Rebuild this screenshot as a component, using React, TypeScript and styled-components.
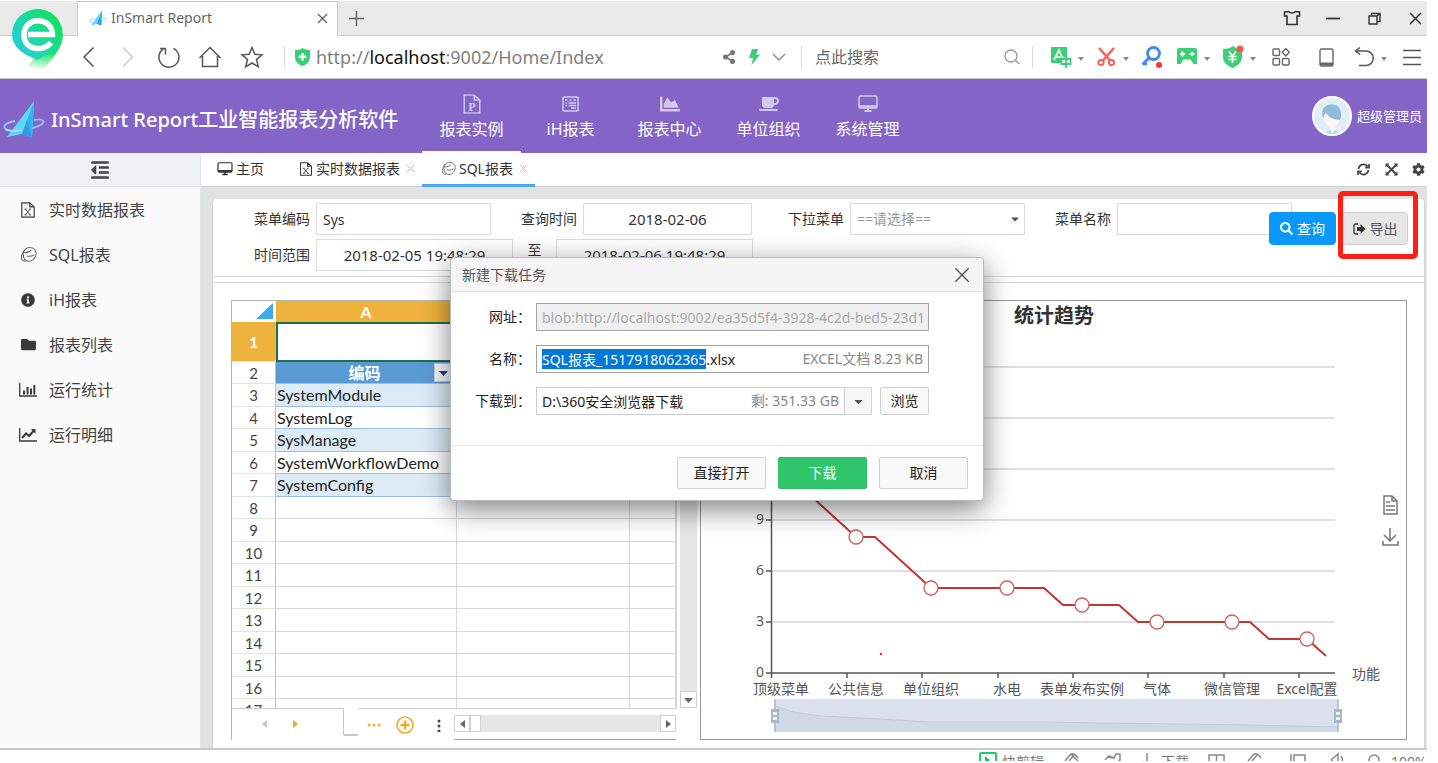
import React, { useEffect, useRef } from 'react';
import styled, { createGlobalStyle } from 'styled-components';
import {
  FaOutdent,
  FaInfoCircle,
  FaFolder,
  FaCoffee,
  FaChartArea,
  FaSearch,
  FaCog,
  FaCaretDown,
  FaShareAlt,
} from 'react-icons/fa';

const GlobalStyle = createGlobalStyle`
  * { box-sizing: border-box; }
  body {
    margin: 0;
    background: #fff;
    color: #333;
    font-family: "Noto Sans", "Noto Sans CJK SC", sans-serif;
    font-size: 14px;
    line-height: 20px;
  }
  button, input, select { font: inherit; color: inherit; }
  button { cursor: pointer; }
  a { color: inherit; text-decoration: none; }
`;

/* ---------- shell ---------- */

const Page = styled.div`
  position: relative;
  padding: 1px 11px 0 0;
`;

const PlainButton = styled.button<{ $w?: number }>`
  display: inline-flex;
  align-items: center;
  justify-content: center;
  flex: none;
  width: ${(p) => (p.$w ? `${p.$w}px` : 'auto')};
  padding: 0;
  border: 0;
  background: none;
`;

const TabStrip = styled.div`
  display: flex;
  height: 35px;
  padding-left: 77px;
  background: #eaeaea;
  border-bottom: 1px solid #cbcbcb;
`;

const BrowserTab = styled.div`
  display: flex;
  align-items: center;
  width: 261px;
  height: 35px;
  padding: 0 8px 2px 11px;
  background: #fff;
  border: solid #cbcbcb;
  border-width: 1px 1px 0;
  color: #666;
`;

const TabTitle = styled.span`
  flex: 1;
  padding-left: 4px;
`;

const WindowControls = styled.div`
  display: flex;
  gap: 17px;
  margin-left: auto;
  color: #333;
`;

const BrandPin = styled.div`
  position: absolute;
  left: 11px;
  top: 8px;
  width: 54px;
  height: 64px;
`;

const AddressBar = styled.div`
  display: flex;
  align-items: center;
  height: 43px;
  padding-left: 69px;
  border-bottom: 1px solid #c9c9c9;
  color: #555;
`;

const Divider = styled.span`
  flex: none;
  width: 1px;
  height: 22px;
  background: #d8d8d8;
`;

const Url = styled.div`
  flex: 1;
  padding-left: 5px;
  font-size: 18px;
  line-height: 24px;
  color: #808080;
  white-space: nowrap;
  b { font-weight: 400; color: #111; }
`;

const SearchBox = styled.input`
  width: 183px;
  height: 28px;
  padding: 0;
  margin-left: 13px;
  border: 0;
  outline: 0;
  font-size: 16px;
  background: none;
  &::placeholder { color: #666; opacity: 1; }
`;

const Tool = styled.div<{ $ml: number }>`
  display: flex;
  flex: none;
  align-items: center;
  margin-left: ${(p) => p.$ml}px;
`;

const Caret = styled.span`
  width: 10px;
  padding-top: 4px;
  line-height: 1px;
  display: flex;
  justify-content: center;
  &::after {
    content: '';
    border: solid transparent;
    border-width: 4px 3px 0;
    border-top-color: #8a8a8a;
  }
`;

/* ---------- application header ---------- */

const AppHeader = styled.header`
  display: flex;
  height: 74px;
  background: #8464c6;
  color: #fff;
`;

const AppTitle = styled.h1`
  display: flex;
  align-items: center;
  gap: 6px;
  width: 422px;
  margin: 0;
  padding: 8px 0 0 3px;
  font-size: 20px;
  line-height: 28px;
  font-weight: 500;
  white-space: nowrap;
`;

const MainNav = styled.nav`
  display: flex;
`;

const NavItem = styled.a<{ $active?: boolean }>`
  display: flex;
  flex-direction: column;
  align-items: center;
  width: 99px;
  padding-top: 15px;
  font-size: 16px;
  line-height: 24px;
  border-bottom: 2px solid ${(p) => (p.$active ? '#fff' : 'transparent')};
  svg { display: block; opacity: 0.65; margin-bottom: 3px; }
`;

const UserBox = styled.a`
  display: flex;
  align-items: center;
  gap: 5px;
  margin-left: auto;
  padding-right: 5px;
  font-size: 13px;
`;

/* ---------- body ---------- */

const Body = styled.div`
  display: flex;
  border-bottom: 2px solid #cacaca;
`;

const Sidebar = styled.aside`
  flex: none;
  width: 201px;
  background: #fafafa;
  border-right: 1px solid #e6e6e6;
`;

const SideToggle = styled(PlainButton)`
  width: 100%;
  height: 34px;
  background: #f0f1f3;
  border-bottom: 1px solid #e4e5e7;
  color: #444;
`;

const SideItem = styled.a`
  display: flex;
  align-items: center;
  height: 45px;
  padding-left: 18px;
  font-size: 16px;
  color: #444;
`;

const SideIcon = styled.span`
  display: flex;
  justify-content: center;
  width: 20px;
  margin-right: 11px;
  color: #3a3a3a;
`;

const Main = styled.main`
  display: flex;
  flex: 1;
  flex-direction: column;
  min-width: 0;
`;

const PageTabs = styled.div`
  display: flex;
  height: 34px;
  border-bottom: 1px solid #d0d0d0;
`;

const PageTab = styled.a<{ $active?: boolean; $pad?: number }>`
  display: flex;
  align-items: center;
  gap: 3px;
  height: 34px;
  padding: 0 7px 0 ${(p) => p.$pad ?? 19}px;
  border-bottom: 3px solid ${(p) => (p.$active ? '#4aa5fb' : 'transparent')};
`;

const TabClose = styled.button`
  display: flex;
  padding: 0;
  margin-left: 3px;
  border: 0;
  background: none;
  color: #b4b4b4;
`;

const TabTools = styled.div`
  display: flex;
  align-items: center;
  gap: 8px;
  margin-left: auto;
  color: #444;
`;

const Stage = styled.div`
  flex: 1;
  padding: 12px 2px 0 11px;
  background: #e1e3e2;
`;

const Sheet = styled.div`
  background: #fff;
  border: solid #d2d2d2;
  border-width: 0 1px;
  border-radius: 4px 4px 0 0;
`;

const Filters = styled.form`
  position: relative;
  height: 78px;
  padding: 4px 0 0 41px;
  border-bottom: 1px solid #d9d9d9;
`;

const FilterRow = styled.div`
  display: flex;
  align-items: center;
  height: 32px;
  margin-bottom: 4px;
`;

const Label = styled.label<{ $w: number }>`
  flex: none;
  width: ${(p) => p.$w}px;
  padding-right: 6px;
  text-align: right;
  white-space: nowrap;
`;

const Until = styled.span`
  width: 43px;
  padding-bottom: 10px;
  text-align: center;
`;

const TextBox = styled.input<{ $w: number; $center?: boolean }>`
  flex: none;
  width: ${(p) => p.$w}px;
  height: 32px;
  padding: 0 6px;
  border: 1px solid #dcdcdc;
  outline: 0;
  background: #fff;
  font-size: ${(p) => (p.$center ? 15 : 14)}px;
  text-align: ${(p) => (p.$center ? 'center' : 'left')};
`;

const SelectWrap = styled.span`
  display: flex;
  align-items: center;
  position: relative;
  color: #999;
  svg { position: absolute; right: 4px; color: #555; pointer-events: none; }
`;

const SelectBox = styled.select`
  width: 175px;
  height: 32px;
  padding: 0 6px;
  border: 1px solid #dcdcdc;
  appearance: none;
  background: #fff;
`;

const FilterActions = styled.div`
  position: absolute;
  top: 13px;
  right: 16px;
  display: flex;
  gap: 6px;
`;

const ActionButton = styled.button<{ $primary?: boolean }>`
  display: flex;
  align-items: center;
  justify-content: center;
  gap: 4px;
  width: ${(p) => (p.$primary ? 67 : 66)}px;
  height: 33px;
  padding: 0;
  border: 1px solid ${(p) => (p.$primary ? '#0a99fb' : '#cfcfcf')};
  border-radius: 4px;
  background: ${(p) => (p.$primary ? '#0a99fb' : '#e6e6e6')};
  color: ${(p) => (p.$primary ? '#fff' : '#555')};
`;

const Highlight = styled.span`
  position: absolute;
  top: -21px;
  right: -10px;
  width: 80px;
  height: 68px;
  border: 5px solid #fd1f12;
  border-radius: 5px;
  pointer-events: none;
`;

const Workspace = styled.section`
  display: flex;
  margin-top: 5px;
  padding: 17px 17px 8px 18px;
  border-top: 1px solid #d9d9d9;
`;

/* ---------- spreadsheet ---------- */

const SheetPane = styled.div`
  flex: none;
  width: 466px;
  margin-right: 3px;
  border-left: 1px solid #b5b5b5;
`;

const GridArea = styled.div`
  display: flex;
  gap: 3px;
  height: 408px;
`;

const GridViewport = styled.div`
  width: 445px;
  overflow: hidden;
  border-top: 1px solid #b5b5b5;
  border-right: 1px solid #d4d4d4;
`;

const GridTable = styled.table`
  width: 444px;
  table-layout: fixed;
  border-collapse: separate;
  border-spacing: 0;
  font-family: Lato, "Noto Sans CJK SC", sans-serif;
  font-size: 16px;
  line-height: 20px;
  color: #222;
  td, th { padding: 0; overflow: hidden; white-space: nowrap; }
`;

const GridRow = styled.tr<{ $h: number }>`
  height: ${(p) => p.$h}px;
`;

const HeadCell = styled.th<{ $on?: boolean }>`
  background: ${(p) => (p.$on ? '#efb33d' : '#fff')};
  color: #fff;
  font-weight: 700;
  border-right: 1px solid ${(p) => (p.$on ? '#efb33d' : '#fff')};
  svg { display: block; margin-left: auto; }
`;

const RowHead = styled.th<{ $on?: boolean }>`
  font-size: 15px;
  font-weight: ${(p) => (p.$on ? 700 : 400)};
  color: ${(p) => (p.$on ? '#fff' : '#444')};
  background: ${(p) => (p.$on ? '#efb33d' : '#fff')};
  border-right: 1px solid #bdbdbd;
  border-bottom: 1px solid #dfe6da;
`;

type CellKind = 'plain' | 'band' | 'white' | 'title' | 'selected';

const cellFill: Record<CellKind, string> = {
  plain: '#fff',
  white: '#fff',
  band: '#ddebf7',
  title: '#5b9bd5',
  selected: '#fff',
};

const Cell = styled.td<{ $kind: CellKind }>`
  background: ${(p) => cellFill[p.$kind]};
  border-bottom: 1px solid ${(p) => (p.$kind === 'plain' ? '#d6d6d6' : '#9bc2e6')};
  border-right: 1px solid ${(p) => (p.$kind === 'plain' ? '#d6d6d6' : 'transparent')};
  ${(p) => p.$kind === 'selected' && 'border: 2px solid #1e7145;'}
  &&& { padding-left: 1px; }
`;

const TitleCell = styled.div`
  display: flex;
  align-items: center;
  color: #fff;
  font-weight: 700;
  span { flex: 1; padding-left: 18px; text-align: center; }
`;

const FilterArrow = styled.button`
  width: 19px;
  height: 19px;
  margin-right: 3px;
  padding: 0;
  border: 1px solid #c4c8d0;
  background: #f7f8fa;
  color: #24408e;
  line-height: 1px;
`;

const VerticalScroll = styled.div`
  display: flex;
  align-items: flex-end;
  width: 17px;
  background: #e6e6e6;
`;

const ScrollButton = styled.button<{ $w: number }>`
  display: flex;
  align-items: center;
  justify-content: center;
  width: ${(p) => p.$w}px;
  height: 17px;
  padding: 0;
  border: 1px solid #d0d0d0;
  background: #fff;
  color: #666;
`;

const SheetTabs = styled.div`
  display: flex;
  height: 32px;
`;

const TabArrows = styled.div`
  display: flex;
  align-items: center;
  gap: 22px;
  width: 112px;
  height: 27px;
  padding: 4px 0 0 28px;
  border-top: 1px solid #c8c8c8;
  border-right: 1px solid #c8c8c8;
`;

const TabSlope = styled.div`
  width: 14px;
  height: 28px;
  border-bottom: 2px solid #c8c8c8;
`;

const TabActions = styled.div`
  display: flex;
  align-items: center;
  width: 96px;
  padding-left: 9px;
  gap: 15px;
  border-top: 1px solid #d0d0d0;
`;

const HorizontalScroll = styled.div`
  width: 222px;
  padding-top: 6px;
  border-top: 1px solid #d0d0d0;
  border-bottom: 1px solid #a6a6a6;
`;

const ScrollTrack = styled.div`
  display: flex;
  background: #e6e6e6;
  button:last-child { margin-left: auto; }
`;

const ChartPane = styled.div`
  flex: 1;
  min-width: 0;
  border: 1px solid #999;
  svg { display: block; width: 100%; }
`;

/* ---------- status bar ---------- */

const StatusBar = styled.footer`
  display: flex;
  align-items: flex-start;
  justify-content: flex-end;
  height: 11px;
  padding-top: 2px;
  overflow: hidden;
  color: #777;
  svg { flex: none; }
`;

const StatusItem = styled.span<{ $w: number }>`
  display: flex;
  flex: none;
  gap: 5px;
  width: ${(p) => p.$w}px;
  white-space: nowrap;
`;

/* ---------- download dialog ---------- */

const DialogLayer = styled.div`
  position: absolute;
  top: 257px;
  left: 0;
  right: 4px;
  display: flex;
  justify-content: center;
`;

const DialogBox = styled.form`
  width: 534px;
  background: #fff;
  border: 1px solid #b3bac0;
  border-radius: 4px;
  box-shadow: 0 8px 28px rgba(0, 0, 0, 0.5);
`;

const DialogHeader = styled.div`
  display: flex;
  align-items: center;
  justify-content: space-between;
  height: 34px;
  padding: 0 13px 0 11px;
  background: #f5f5f5;
  border-bottom: 1px solid #e0e0e0;
  border-radius: 4px 4px 0 0;
  color: #555;
`;

const DialogFields = styled.div`
  display: flex;
  flex-direction: column;
  gap: 14px;
  height: 154px;
  padding: 11px 0 0 10px;
  border-bottom: 1px solid #e6e6e6;
`;

const DialogRow = styled.div`
  display: flex;
  align-items: center;
`;

const DialogLabel = styled.label`
  width: 75px;
  padding-right: 5px;
  text-align: right;
  color: #222;
`;

const DialogInput = styled.div<{ $w: number; $muted?: boolean; $soft?: boolean }>`
  display: flex;
  align-items: center;
  width: ${(p) => p.$w}px;
  height: 28px;
  padding: 0 5px;
  border: 1px solid ${(p) => (p.$soft ? '#c9ccd4' : '#a3a3a3')};
  background: ${(p) => (p.$muted ? '#f0f0f0' : '#fff')};
  color: ${(p) => (p.$muted ? '#aaa' : '#222')};
  input {
    flex: 1;
    min-width: 0;
    height: 21px;
    padding: 0;
    border: 0;
    outline: 0;
    background: none;
  }
  input::selection { background: #0078d7; color: #fff; }
  span { color: #888; white-space: nowrap; }
`;

const DialogButton = styled.button<{ $w: number; $green?: boolean; $small?: boolean }>`
  width: ${(p) => p.$w}px;
  height: ${(p) => (p.$small ? 28 : 32)}px;
  padding: 0;
  border: 1px solid ${(p) => (p.$green ? '#2dc063' : '#d0d0d0')};
  border-radius: 2px;
  background: ${(p) => (p.$green ? '#31c56b' : '#f9f9f9')};
  color: ${(p) => (p.$green ? '#fff' : '#222')};
`;

const DropButton = styled(PlainButton)`
  width: 27px;
  height: 28px;
  margin-right: 8px;
  border: 1px solid #d4d7de;
  border-left: 0;
  background: #f7f7f7;
  color: #555;
`;

const DialogFooter = styled.div`
  display: flex;
  justify-content: flex-end;
  gap: 12px;
  padding: 11px 15px 11px 0;
`;

/* ---------- icons ---------- */

const PlaneLogo = ({ w, h }: { w: number; h: number }) => (
  <svg width={w} height={h} viewBox="0 0 42 38">
    <path d="M12 20 C-3 23 -2 30 14 29.500 C31 28 43 23 40 20 C39 18.500 36 18 31 19" fill="none" stroke="#8fc8f2" strokeWidth="1.800" />
    <path d="M31 0 L4 36 L19 33 L29 36 Z" fill="#5fd6fa" />
    <path d="M31 0 L19 33 L29 36 Z" fill="#35b3ee" />
    <path d="M24 19 L19 33 L29 36 Z" fill="#2b9fe2" />
    <path d="M2 28 C5 31 12 30 19 29" fill="none" stroke="#a9dcf8" strokeWidth="1.500" />
  </svg>
);

const FileIcon = ({ size, letter }: { size: number; letter: 'P' | 'X' }) => (
  <svg width={size} height={size} viewBox="0 0 18 18" fill="none" stroke="currentColor" strokeWidth="1.3">
    <path d="M2 1 H11 L16 5.500 V17 H2 Z M11 1 V5.500 H16" />
    {letter === 'X' ? (
      <path d="M6 8 L11.500 14.500 M11.500 8 L6 14.500 M5 8 H7.500 M10.200 8 H12.500 M5 14.500 H7.500 M10.200 14.500 H12.500" strokeWidth="1" />
    ) : (
      <text x="9" y="15" textAnchor="middle" fontFamily="Liberation Serif, serif" fontWeight="700" fontSize="11" fill="currentColor" stroke="none">P</text>
    )}
  </svg>
);

const SwirlIcon = ({ size }: { size: number }) => (
  <svg width={size} height={size} viewBox="0 0 18 18" fill="none" stroke="#666" strokeWidth="1.1">
    <path d="M3.500 9.500 C3 5 6 1.500 10.500 1.500 C15 1.500 17.500 5.500 17 9 C16 14 12 17 8 16 C5 15 3.500 12.500 3.500 9.500" />
    <path d="M4 7 C7 7.500 10 6 12 4.500 M7 10.500 C10 11.500 13 10.500 15 9.500" />
    <path d="M5 4 C1.500 8 0.500 13 2.500 15 C3.500 16 5 16 6.500 15.500" />
  </svg>
);

const ListIcon = () => (
  <svg width="20" height="20" viewBox="0 0 20 20" fill="none" stroke="currentColor" strokeWidth="1.500">
    <rect x="2" y="3" width="15" height="14" rx="1" />
    <path d="M4 6 H6.500 M8.500 6 H10.500 M12.500 6 H15 M4.500 9 H6 M7.500 9 H15 M4.500 11.500 H6 M7.500 11.500 H15 M10 14 H15" />
  </svg>
);

const MonitorIcon = ({ w, h }: { w: number; h: number }) => (
  <svg width={w} height={h} viewBox="0 0 20 18" fill="none" stroke="currentColor" strokeWidth="1.500">
    <rect x="1" y="1" width="18" height="12" rx="1.500" />
    <path d="M1 11.500 H19" strokeWidth="2.500" />
    <path d="M10 13 V16 M6.500 16 H13.500" strokeWidth="2" />
  </svg>
);

const BarsIcon = () => (
  <svg width="18" height="15" viewBox="0 0 18 15" fill="none" stroke="currentColor">
    <path d="M0.700 1 V14 H18" strokeWidth="1.300" />
    <path d="M5 12.500 V8.500 M8.500 12.500 V5 M12 12.500 V6.500 M15.300 12.500 V3" strokeWidth="2" />
  </svg>
);

const TrendIcon = () => (
  <svg width="18" height="15" viewBox="0 0 18 15" fill="none" stroke="currentColor">
    <path d="M0.700 1 V14 H18" strokeWidth="1.300" />
    <path d="M3 11 L7 6.500 L10 9 L15 3.500" strokeWidth="2" />
    <path d="M11.800 2 H16.500 V6.700 Z" fill="currentColor" stroke="none" />
  </svg>
);

const CrossIcon = ({ size, width = 1.2 }: { size: number; width?: number }) => (
  <svg width={size} height={size} viewBox="0 0 12 12" fill="none" stroke="currentColor" strokeWidth={width}>
    <path d="M1 1 L11 11 M11 1 L1 11" />
  </svg>
);

const ToolbarIcon = ({ children, color = '#555', size = 24 }: { children: React.ReactNode; color?: string; size?: number }) => (
  <svg width={size} height={size} viewBox="0 0 24 24" fill="none" stroke={color} strokeWidth="1.500">
    {children}
  </svg>
);

const Arrow = ({ dir, color = 'currentColor' }: { dir: 'left' | 'right' | 'down'; color?: string }) => {
  const d = { left: 'M7 0 V8 L2 4 Z', right: 'M2 0 V8 L7 4 Z', down: 'M0 2 H9 L4.500 7 Z' }[dir];
  return (
    <svg width="9" height="8" viewBox="0 0 9 8" fill={color}>
      <path d={d} />
    </svg>
  );
};

/* ---------- sections ---------- */

const BrowserChrome = () => (
  <>
    <TabStrip>
      <BrowserTab>
        <PlaneLogo w={18} h={16} />
        <TabTitle>InSmart Report</TabTitle>
        <PlainButton $w={14} aria-label="关闭标签"><CrossIcon size={11} width={1.5} /></PlainButton>
      </BrowserTab>
      <PlainButton $w={37} aria-label="新建标签">
        <svg width="15" height="15" viewBox="0 0 15 15" stroke="#666" strokeWidth="1.500"><path d="M7.500 0 V15 M0 7.500 H15" /></svg>
      </PlainButton>
      <WindowControls>
        <PlainButton $w={24} aria-label="皮肤">
          <svg width="18" height="16" viewBox="0 0 18 16" fill="none" stroke="currentColor" strokeWidth="1.600">
            <path d="M1.500 2 L5.500 1.500 C7 3.500 11 3.500 12.500 1.500 L16.500 2 V6 H14 V14.500 H4 V6 H1.500 Z" />
          </svg>
        </PlainButton>
        <PlainButton $w={24} aria-label="最小化">
          <svg width="14" height="4" viewBox="0 0 14 4" stroke="currentColor" strokeWidth="1.800"><path d="M0 2.500 H14" /></svg>
        </PlainButton>
        <PlainButton $w={24} aria-label="还原">
          <svg width="13" height="13" viewBox="0 0 13 13" fill="none" stroke="currentColor" strokeWidth="1.400">
            <path d="M1 4 H9 V12 H1 Z M3.500 4 V1.500 H12 V9.500 H9 M9 4 L12 1.500" />
          </svg>
        </PlainButton>
        <PlainButton $w={24} aria-label="关闭"><CrossIcon size={13} width={1.4} /></PlainButton>
      </WindowControls>
    </TabStrip>

    <AddressBar>
      <PlainButton $w={40} aria-label="后退"><ToolbarIcon><path d="M16.500 2.500 L7 12 L16.500 21.500" /></ToolbarIcon></PlainButton>
      <PlainButton $w={38} aria-label="前进"><ToolbarIcon color="#ccc"><path d="M7 2.500 L16.500 12 L7 21.500" /></ToolbarIcon></PlainButton>
      <PlainButton $w={43} aria-label="刷新">
        <ToolbarIcon><path d="M7 3.500 A10 10 0 1 0 16.500 3.300 M3 3.500 H8.500 V9.500" /></ToolbarIcon>
      </PlainButton>
      <PlainButton $w={40} aria-label="主页">
        <ToolbarIcon><path d="M1.500 13 L12 2.500 L22.500 13 M4.500 11 V21.500 H19.500 V11" /></ToolbarIcon>
      </PlainButton>
      <PlainButton $w={43} aria-label="收藏">
        <ToolbarIcon><path d="M12 2.500 L14.800 9.300 L22 9.800 L16.500 14.500 L18.300 21.800 L12 18 L5.700 21.800 L7.500 14.500 L2 9.800 L9.200 9.300 Z" /></ToolbarIcon>
      </PlainButton>
      <Tool $ml={11}><Divider /></Tool>
      <Tool $ml={9}>
        <svg width="17" height="18" viewBox="0 0 17 18">
          <path d="M1 2 C5 2 7 1 8.500 0 C10 1 12 2 16 2 V9 C16 14 12 17 8.500 18 C5 17 1 14 1 9 Z" fill="#36cf73" />
          <path d="M8.500 5 V12.500 M4.700 8.700 H12.300" stroke="#fff" strokeWidth="2.400" />
        </svg>
      </Tool>
      <Url>http://<b>localhost</b>:9002/Home/Index</Url>
      <PlainButton $w={25} aria-label="分享"><FaShareAlt size={14} color="#777" /></PlainButton>
      <PlainButton $w={25} aria-label="加速">
        <svg width="12" height="16" viewBox="0 0 12 16" fill="#36cf73"><path d="M4 0 H10.500 L8 5.500 H12 L3.500 16 L5 9 H1 Z" /></svg>
      </PlainButton>
      <PlainButton $w={25} aria-label="展开">
        <svg width="14" height="8" viewBox="0 0 14 8" fill="none" stroke="#888" strokeWidth="1.300"><path d="M1 1 L7 7 L13 1" /></svg>
      </PlainButton>
      <Tool $ml={10}><Divider /></Tool>
      <SearchBox placeholder="点此搜索" aria-label="点此搜索" />
      <PlainButton $w={28} aria-label="搜索">
        <svg width="16" height="16" viewBox="0 0 16 16" fill="none" stroke="#999" strokeWidth="1.300"><circle cx="7" cy="7" r="6" /><path d="M11.500 11.500 L15.500 15" /></svg>
      </PlainButton>
      <Tool $ml={6}><Divider /></Tool>
      <Tool $ml={13}>
        <PlainButton $w={30} aria-label="翻译">
          <ToolbarIcon color="#3ad077">
            <path d="M2 2 H18 V12 H13 V18 H2 Z" fill="#3ad077" stroke="none" />
            <path d="M5 15 L10 5 L13 12 M7 12 H12" stroke="#fff" strokeWidth="1.700" />
            <path d="M12.500 14 H21.500 V19 H12.500 Z M17 11 V23" strokeWidth="1.800" />
          </ToolbarIcon>
        </PlainButton>
        <Caret />
      </Tool>
      <Tool $ml={5}>
        <PlainButton $w={30} aria-label="截图">
          <ToolbarIcon color="#f7625c">
            <path d="M5 3 L16.500 16 M20 3 L8.500 16" strokeWidth="2.600" />
            <circle cx="7" cy="17.500" r="2.600" strokeWidth="2" /><circle cx="17.500" cy="17.500" r="2.600" strokeWidth="2" />
          </ToolbarIcon>
        </PlainButton>
        <Caret />
      </Tool>
      <Tool $ml={6}>
        <PlainButton $w={30} aria-label="查找">
          <ToolbarIcon color="#4288f2">
            <circle cx="13.500" cy="8.500" r="6" strokeWidth="2.800" />
            <path d="M9 13 L2.500 19.500 M4 17 L6.500 20" strokeWidth="3" />
            <circle cx="19" cy="20" r="3" fill="#f33" stroke="none" />
          </ToolbarIcon>
        </PlainButton>
      </Tool>
      <Tool $ml={5}>
        <PlainButton $w={30} aria-label="游戏">
          <ToolbarIcon color="#3ad077">
            <path d="M4 3 H20 Q22 3 22 5 V19 H18.500 L15.500 14.500 H8.500 L5.500 19 H2 V5 Q2 3 4 3 Z" fill="#3ad077" stroke="none" />
            <path d="M7.500 6.500 V11.500 M5 9 H10 M14.500 9 H19.500 M17 7 V11" stroke="#fff" strokeWidth="2" />
          </ToolbarIcon>
        </PlainButton>
        <Caret />
      </Tool>
      <Tool $ml={6}>
        <PlainButton $w={30} aria-label="购物">
          <ToolbarIcon color="#3ad077">
            <path d="M2 4 C7 4 9.500 3 12 1 C14.500 3 17 4 21 4 V12 C21 18 16 21 11.500 23 C7 21 2 18 2 12 Z" fill="#3ad077" stroke="none" />
            <path d="M8 6.500 L11.500 11 L15 6.500 M11.500 11 V18 M7.500 11.500 H15.500 M7.500 14.500 H15.500" stroke="#fff" strokeWidth="1.700" />
            <circle cx="19" cy="4" r="3.500" fill="#fb5650" stroke="none" />
          </ToolbarIcon>
        </PlainButton>
        <Caret />
      </Tool>
      <Tool $ml={8}>
        <PlainButton $w={30} aria-label="扩展">
          <svg width="18" height="18" viewBox="0 0 18 18" fill="none" stroke="#666" strokeWidth="1.400">
            <rect x="1" y="1" width="6.500" height="6.500" rx="1" /><path d="M13.800 0.500 L17.300 4.200 L13.800 7.900 L10.300 4.200 Z" />
            <rect x="1" y="10.500" width="6.500" height="6.500" rx="1" /><rect x="10.500" y="10.500" width="6.500" height="6.500" rx="1" />
          </svg>
        </PlainButton>
      </Tool>
      <Tool $ml={15}>
        <PlainButton $w={30} aria-label="手机">
          <svg width="15" height="19" viewBox="0 0 15 19" fill="none" stroke="#666" strokeWidth="1.400">
            <rect x="1" y="1" width="13" height="17" rx="1.500" /><path d="M1 16 H14" strokeWidth="3" />
          </svg>
        </PlainButton>
      </Tool>
      <Tool $ml={8}>
        <PlainButton $w={30} aria-label="恢复">
          <ToolbarIcon><path d="M8 2.500 L3.500 6 L8 9.500 M3.500 6 H14 A7 7 0 0 1 14 20.500 H7" /></ToolbarIcon>
        </PlainButton>
        <Caret />
      </Tool>
      <Tool $ml={8}>
        <PlainButton $w={30} aria-label="菜单">
          <svg width="18" height="17" viewBox="0 0 18 17" stroke="#555" strokeWidth="1.600"><path d="M0 1.500 H18 M0 8.500 H18 M0 15.500 H18" /></svg>
        </PlainButton>
      </Tool>
    </AddressBar>

    <BrandPin>
      <svg width="54" height="64" viewBox="0 0 54 64">
        <defs>
          <linearGradient id="pin" x1="0" y1="1" x2="1" y2="0.300">
            <stop offset="0" stopColor="#2bc8f5" /><stop offset="0.500" stopColor="#1bd9a8" /><stop offset="1" stopColor="#11e05f" />
          </linearGradient>
          <linearGradient id="tail" x1="0.500" y1="0" x2="0.300" y2="1">
            <stop offset="0.450" stopColor="#14e566" /><stop offset="1" stopColor="#14e566" stopOpacity="0" />
          </linearGradient>
        </defs>
        <path d="M51 27 C52 42 38 53 33 61 L13 62 L28 45 Z" fill="url(#tail)" />
        <path d="M26.500 1 A25.500 25.500 0 0 1 48 40 C42 45 34 46 27 52 C20 49 1 43 1 26 A25.500 25.500 0 0 1 26.500 1 Z" fill="url(#pin)" />
        <path d="M17 26.500 H41.500 C41 8 13 8 13 27 C13 43 33 44 40 34.500" fill="none" stroke="#fff" strokeWidth="5.500" />
      </svg>
    </BrandPin>
  </>
);

const Header = () => (
  <AppHeader>
    <AppTitle>
      <PlaneLogo w={42} h={38} />
      InSmart Report工业智能报表分析软件
    </AppTitle>
    <MainNav>
      <NavItem href="#" $active><FileIcon size={20} letter="P" />报表实例</NavItem>
      <NavItem href="#"><ListIcon />iH报表</NavItem>
      <NavItem href="#"><FaChartArea size={20} />报表中心</NavItem>
      <NavItem href="#"><FaCoffee size={20} />单位组织</NavItem>
      <NavItem href="#"><MonitorIcon w={20} h={20} />系统管理</NavItem>
    </MainNav>
    <UserBox href="#">
      <svg width="40" height="40" viewBox="0 0 40 40">
        <circle cx="20" cy="20" r="19" fill="#dfeefa" stroke="#fff" strokeWidth="2" />
        <path d="M12 18 C12 30 17 29 18 30 V34 L13 37 H27 L23 34 V30 C25 29 28 28 28 18 Z" fill="#fdf6f2" />
        <path d="M10.500 20 C9 12 14 8 20 8.500 C26 8 30 13 29 22 L28 24 C22 24 16 21 14 17 C12 18 12 20 11.500 22 Z" fill="#8fbcd8" />
        <path d="M13 36 L18 34 L20 37 L23 34 L27 36 C23 39 17 39 13 36 Z" fill="#b5dff5" />
      </svg>
      超级管理员
    </UserBox>
  </AppHeader>
);

const sideItems: [string, React.ReactNode][] = [
  ['实时数据报表', <FileIcon size={16} letter="X" />],
  ['SQL报表', <SwirlIcon size={17} />],
  ['iH报表', <FaInfoCircle size={14} />],
  ['报表列表', <FaFolder size={15} />],
  ['运行统计', <BarsIcon />],
  ['运行明细', <TrendIcon />],
];

const dataRows = ['SystemModule', 'SystemLog', 'SysManage', 'SystemWorkflowDemo', 'SystemConfig'];

const Spreadsheet = () => (
  <SheetPane>
    <GridArea>
      <GridViewport>
        <GridTable>
          <colgroup><col style={{ width: 44 }} /><col style={{ width: 181 }} /><col style={{ width: 173 }} /><col /></colgroup>
          <thead>
            <GridRow $h={21}>
              <HeadCell>
                <svg width="19" height="17" viewBox="0 0 19 17"><path d="M17 0 V16 H0 Z" fill="#3fa9ee" /></svg>
              </HeadCell>
              <HeadCell $on>A</HeadCell><HeadCell $on /><HeadCell $on />
            </GridRow>
          </thead>
          <tbody>
            <GridRow $h={40}>
              <RowHead $on>1</RowHead>
              <Cell $kind="selected" colSpan={3} />
            </GridRow>
            <GridRow $h={22}>
              <RowHead>2</RowHead>
              <Cell $kind="title">
                <TitleCell>
                  <span>编码</span>
                  <FilterArrow type="button" aria-label="筛选"><Arrow dir="down" /></FilterArrow>
                </TitleCell>
              </Cell>
              <Cell $kind="title" /><Cell $kind="title" />
            </GridRow>
            {Array.from({ length: 15 }, (_, i) => {
              const kind: CellKind = i >= dataRows.length ? 'plain' : i % 2 === 0 ? 'band' : 'white';
              return (
                <GridRow key={i} $h={i % 2 === 0 ? 23 : 22}>
                  <RowHead>{i + 3}</RowHead>
                  <Cell $kind={kind}>{dataRows[i]}</Cell>
                  <Cell $kind={kind} />
                  <Cell $kind={kind} />
                </GridRow>
              );
            })}
          </tbody>
        </GridTable>
      </GridViewport>
      <VerticalScroll>
        <ScrollButton type="button" $w={17} aria-label="向下滚动"><Arrow dir="down" /></ScrollButton>
      </VerticalScroll>
    </GridArea>
    <SheetTabs>
      <TabArrows>
        <Arrow dir="left" color="#c4c4c4" />
        <Arrow dir="right" color="#f2a91f" />
      </TabArrows>
      <TabSlope />
      <TabActions>
        <svg width="14" height="4" viewBox="0 0 14 4" fill="#f2ab2e"><circle cx="2" cy="2" r="1.500" /><circle cx="7" cy="2" r="1.500" /><circle cx="12" cy="2" r="1.500" /></svg>
        <svg width="18" height="18" viewBox="0 0 18 18" fill="none" stroke="#f2ab2e"><circle cx="9" cy="9" r="8" strokeWidth="1.600" /><path d="M9 4.500 V13.500 M4.500 9 H13.500" strokeWidth="2.400" /></svg>
        <svg width="14" height="14" viewBox="-3 0 14 14" fill="#444"><circle cx="7" cy="3" r="1.500" /><circle cx="7" cy="8" r="1.500" /><circle cx="7" cy="13" r="1.500" /></svg>
      </TabActions>
      <HorizontalScroll>
        <ScrollTrack>
          <ScrollButton type="button" $w={16} aria-label="向左滚动"><Arrow dir="left" /></ScrollButton>
          <ScrollButton type="button" $w={11} aria-label="滑块" />
          <ScrollButton type="button" $w={16} aria-label="向右滚动"><Arrow dir="right" /></ScrollButton>
        </ScrollTrack>
      </HorizontalScroll>
    </SheetTabs>
  </SheetPane>
);

const categories = ['顶级菜单', '公共信息', '单位组织', '水电', '表单发布实例', '气体', '微信管理', 'Excel配置'];
const categoryX = (i: number) => 80 + Math.round(i * 75.2);
const valueY = (v: number) => 372 - v * 17;
const markers = [[1, 8], [2, 5], [3, 5], [4, 4], [5, 3], [6, 3], [7, 2]];

const TrendChart = () => (
  <ChartPane>
    <svg viewBox="0 0 705 438" fontSize="14" fill="#555">
      <text x="353" y="22" textAnchor="middle" fontSize="20" fontWeight="700" fill="#333">统计趋势</text>
      <g stroke="#d6d6d6" strokeWidth="1.500">
        {[3, 6, 9, 12, 15, 18].map((v) => <path key={v} d={`M71 ${valueY(v)} H634`} />)}
      </g>
      {[0, 3, 6, 9].map((v) => (
        <text key={v} x="63" y={valueY(v) + 4} textAnchor="end">{v}</text>
      ))}
      <g stroke="#555" strokeWidth="1.500" fill="none">
        <path d="M70.500 67 V377 M65 372 H634" />
        {[3, 6, 9].map((v) => <path key={v} d={`M65 ${valueY(v)} H70`} />)}
        {categories.slice(1).map((c, i) => <path key={c} d={`M${146 + Math.round(i * 75.3)} 372 V377`} />)}
      </g>
      <path
        d="M80 152 L99 185 L155 236 H174 L230 287 H343 L362 304 H418 L437 321 H549 L568 338 H606 L625 355"
        fill="none" stroke="#c23531" strokeWidth="2"
      />
      {markers.map(([i, v]) => (
        <circle key={i} cx={categoryX(i)} cy={valueY(v)} r="7" fill="#fff" stroke="#d0605c" strokeWidth="1.300" />
      ))}
      {categories.map((c, i) => (
        <text key={c} x={categoryX(i)} y="393" textAnchor="middle">{c}</text>
      ))}
      <text x="651" y="378">功能</text>
      <circle cx="180" cy="353" r="1.200" fill="#f22" />
      <rect x="73" y="398" width="564" height="33" fill="#dae1ec" />
      <path d="M74 405 L92 411 L120 415 L160 417 L230 421 L343 421 L400 422 L550 424 L637 426 V431 H74 Z" fill="#d0d8e4" />
      <path d="M74 405 L92 411 L120 415 L160 417 L230 421 L343 421 L400 422 L550 424 L637 426" fill="none" stroke="#c2ccd8" />
      {[74, 637].map((x) => (
        <g key={x}>
          <path d={`M${x} 398 V431`} stroke="#a7b7cc" strokeWidth="1.500" />
          <rect x={x - 4} y="408" width="8" height="14" fill="#a7b7cc" />
          <path d={`M${x - 2} 412.500 H${x + 2} M${x - 2} 417.500 H${x + 2}`} stroke="#fff" strokeWidth="2.500" />
        </g>
      ))}
      <g fill="none" stroke="#777" strokeWidth="1.500">
        <path d="M683 195 H691 L696 200 V213 H683 Z M691 195 V200 H696 M685 201 H689 M685 205 H694 M685 209 H694" />
        <path d="M689 227 V240 M683 234 L689 240 L695 234 M682 240 V244 H697 V240" />
      </g>
    </svg>
  </ChartPane>
);

const FilterForm = () => (
  <Filters>
    <FilterRow>
      <Label $w={62} htmlFor="code">菜单编码</Label>
      <TextBox $w={175} id="code" defaultValue="Sys" />
      <Label $w={92} htmlFor="date">查询时间</Label>
      <TextBox $w={169} $center id="date" defaultValue="2018-02-06" />
      <Label $w={98} htmlFor="menu">下拉菜单</Label>
      <SelectWrap>
        <SelectBox id="menu"><option>==请选择==</option></SelectBox>
        <FaCaretDown size={12} />
      </SelectWrap>
      <Label $w={92} htmlFor="name">菜单名称</Label>
      <TextBox $w={175} id="name" />
    </FilterRow>
    <FilterRow>
      <Label $w={62} htmlFor="from">时间范围</Label>
      <TextBox $w={197} $center id="from" defaultValue="2018-02-05 19:48:29" />
      <Until>至</Until>
      <TextBox $w={197} $center id="to" aria-label="至" defaultValue="2018-02-06 19:48:29" />
    </FilterRow>
    <FilterActions>
      <ActionButton type="button" $primary><FaSearch size={13} />查询</ActionButton>
      <ActionButton type="button">
        <svg width="13" height="12" viewBox="0 0 13 12" fill="none" stroke="#333" strokeWidth="1.300">
          <path d="M5 1 H2.500 Q1 1 1 2.500 V9.500 Q1 11 2.500 11 H5" />
          <path d="M4 4 H7.500 V1 L12.500 6 L7.500 11 V8 H4 Z" fill="#333" stroke="none" />
        </svg>
        导出
      </ActionButton>
      <Highlight />
    </FilterActions>
  </Filters>
);

const DownloadDialog = () => {
  const nameRef = useRef<HTMLInputElement>(null);
  useEffect(() => {
    const input = nameRef.current;
    if (input) {
      input.focus({ preventScroll: true });
      input.setSelectionRange(0, input.value.indexOf('.'));
    }
  }, []);

  return (
    <DialogLayer>
      <DialogBox role="dialog" aria-label="新建下载任务">
        <DialogHeader>
          新建下载任务
          <PlainButton type="button" aria-label="关闭"><CrossIcon size={16} width={1} /></PlainButton>
        </DialogHeader>
        <DialogFields>
          <DialogRow>
            <DialogLabel htmlFor="url">网址：</DialogLabel>
            <DialogInput $w={393} $muted>
              <input id="url" readOnly defaultValue="blob:http://localhost:9002/ea35d5f4-3928-4c2d-bed5-23d1" />
            </DialogInput>
          </DialogRow>
          <DialogRow>
            <DialogLabel htmlFor="file">名称：</DialogLabel>
            <DialogInput $w={393}>
              <input id="file" ref={nameRef} defaultValue="SQL报表_1517918062365.xlsx" />
              <span>EXCEL文档 8.23 KB</span>
            </DialogInput>
          </DialogRow>
          <DialogRow>
            <DialogLabel htmlFor="path">下载到：</DialogLabel>
            <DialogInput $w={309} $soft>
              <input id="path" defaultValue="D:\360安全浏览器下载" />
              <span>剩: 351.33 GB</span>
            </DialogInput>
            <DropButton type="button" aria-label="选择目录"><FaCaretDown size={13} /></DropButton>
            <DialogButton type="button" $w={49} $small>浏览</DialogButton>
          </DialogRow>
        </DialogFields>
        <DialogFooter>
          <DialogButton type="button" $w={89}>直接打开</DialogButton>
          <DialogButton type="button" $w={89} $green>下载</DialogButton>
          <DialogButton type="button" $w={89}>取消</DialogButton>
        </DialogFooter>
      </DialogBox>
    </DialogLayer>
  );
};

const StatusIcon = ({ d }: { d: string }) => (
  <svg width="17" height="17" viewBox="0 0 17 17" fill="none" stroke="#888" strokeWidth="1.500"><path d={d} /></svg>
);

const Status = () => (
  <StatusBar>
    <StatusItem $w={84}>
      <svg width="18" height="16" viewBox="0 0 18 16" fill="none" stroke="#1fca6b" strokeWidth="2">
        <rect x="1" y="1" width="16" height="14" rx="1" /><path d="M6 4 L11 8 L6 12 Z" fill="#1fca6b" stroke="none" />
      </svg>
      快剪辑
    </StatusItem>
    <StatusItem $w={41}><StatusIcon d="M2 9 L8 2 Q12 1 15 6 M6 9 L11 3 M8 2 L15 9" /></StatusItem>
    <StatusItem $w={35}><StatusIcon d="M1 8 L5 4 L10 6 L12 2 H16 V8 L12 12 M3 5 L10 6" /></StatusItem>
    <StatusItem $w={69}><StatusIcon d="M8 1 V12 M4 9 L8 13 L12 9" />下载</StatusItem>
    <StatusItem $w={38}><StatusIcon d="M1 3 H16 V14 H1 Z M8.500 3 V14" /></StatusItem>
    <StatusItem $w={43}><StatusIcon d="M2 9 L8 2 Q12 1 15 6 M6 9 L11 3" /></StatusItem>
    <StatusItem $w={41}><StatusIcon d="M5 3 H16 V13 H5 Z M2 2 V12" /></StatusItem>
    <StatusItem $w={36}><StatusIcon d="M1 8 L8 2 V14 L1 8 M11 4 Q14 8 11 12" /></StatusItem>
    <StatusItem $w={25}><StatusIcon d="M3 8 A5 5 0 0 1 13 8 A5 5 0 0 1 3 8" /></StatusItem>
    <StatusItem $w={36}>100%</StatusItem>
  </StatusBar>
);

export default function App() {
  return (
    <Page>
      <GlobalStyle />
      <BrowserChrome />
      <Header />
      <Body>
        <Sidebar>
          <SideToggle aria-label="收起菜单"><FaOutdent size={20} /></SideToggle>
          {sideItems.map(([label, icon]) => (
            <SideItem href="#" key={label}><SideIcon>{icon}</SideIcon>{label}</SideItem>
          ))}
        </Sidebar>
        <Main>
          <PageTabs>
            <PageTab href="#" $pad={16}><MonitorIcon w={16} h={14} /><span>主页</span></PageTab>
            <PageTab as="div" $pad={28}>
              <FileIcon size={14} letter="X" /><a href="#">实时数据报表</a>
              <TabClose aria-label="关闭实时数据报表"><CrossIcon size={9} /></TabClose>
            </PageTab>
            <PageTab as="div" $active>
              <SwirlIcon size={15} /><a href="#">SQL报表</a>
              <TabClose aria-label="关闭SQL报表"><CrossIcon size={9} /></TabClose>
            </PageTab>
            <TabTools>
              <PlainButton $w={20} aria-label="刷新">
                <svg width="13" height="13" viewBox="0 0 13 13" fill="none" stroke="currentColor" strokeWidth="1.700">
                  <path d="M1.500 6 A5 5 0 0 1 10.500 3.500 M11.500 7 A5 5 0 0 1 2.500 9.500 M12 1 V4.700 H8.300 M1 12 V8.300 H4.700" />
                </svg>
              </PlainButton>
              <PlainButton $w={20} aria-label="全屏">
                <svg width="13" height="13" viewBox="0 0 13 13" fill="currentColor" stroke="currentColor">
                  <path d="M2 2 L11 11 M11 2 L2 11" strokeWidth="1.800" />
                  <path d="M0.500 0.500 H4.500 L0.500 4.500 Z M12.500 0.500 V4.500 L8.500 0.500 Z M0.500 12.500 V8.500 L4.500 12.500 Z M12.500 12.500 H8.500 L12.500 8.500 Z" stroke="none" />
                </svg>
              </PlainButton>
              <PlainButton $w={18} aria-label="设置"><FaCog size={13} /></PlainButton>
            </TabTools>
          </PageTabs>
          <Stage>
            <Sheet>
              <FilterForm />
              <Workspace>
                <Spreadsheet />
                <TrendChart />
              </Workspace>
            </Sheet>
          </Stage>
        </Main>
      </Body>
      <Status />
      <DownloadDialog />
    </Page>
  );
}
